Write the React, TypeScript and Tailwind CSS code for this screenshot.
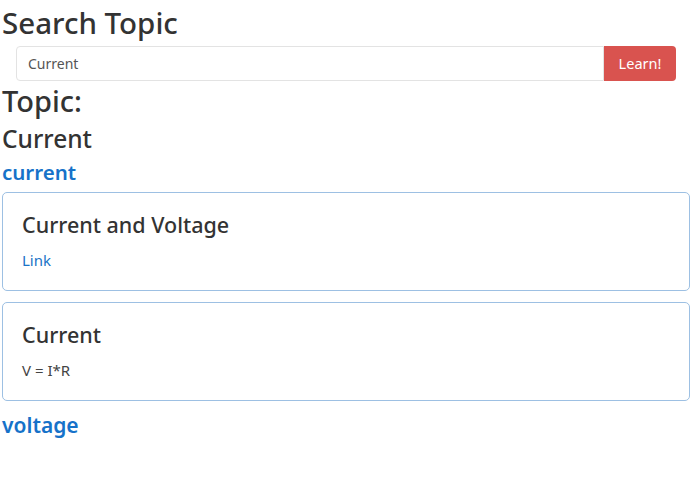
import { useState } from 'react'

const results = [
  { title: 'Current and Voltage', body: 'Link', isLink: true },
  { title: 'Current', body: 'V = I*R', isLink: false },
]

export default function App() {
  const [query, setQuery] = useState('Current')

  return (
    <div className="min-h-screen bg-white pl-[2px] pr-[5px] text-[#333] font-['Noto_Sans',sans-serif]">
      <h1 className="text-[29.5px] font-medium leading-[45px]">Search Topic</h1>

      {/* Search bar */}
      <div className="ml-[14px] mr-[14px] mt-[1px] flex h-[35px]">
        <input
          value={query}
          onChange={(e) => setQuery(e.target.value)}
          className="flex-1 rounded-l-[4px] border border-[#e3e3e3] px-[11px] text-[14px] text-[#555] outline-none"
        />
        <button className="w-[72px] rounded-r-[4px] bg-[#d9534f] text-[14.5px] text-white">Learn!</button>
      </div>

      <h2 className="mt-[1px] text-[29px] font-medium leading-[38px]">Topic:</h2>
      <h3 className="mt-[2px] text-[24.5px] font-medium leading-[34px]">Current</h3>

      <a href="#" className="mt-[1px] block text-[20.5px] font-semibold leading-[30px] text-[#1672c9]">current</a>

      <div className="mt-[5px] flex flex-col gap-[11px]">
        {results.map((r) => (
          <div key={r.title} className="h-[99px] rounded-[5px] border border-[#9dc0e3] px-[19px] pt-[17px]">
            <h4 className="text-[21.5px] font-medium leading-[30px]">{r.title}</h4>
            {r.isLink ? (
              <a href="#" className="mt-[10px] block text-[15px] leading-[20px] text-[#1a73c7]">{r.body}</a>
            ) : (
              <p className="mt-[10px] text-[15px] leading-[20px] text-[#444]">{r.body}</p>
            )}
          </div>
        ))}
      </div>

      <a href="#" className="mt-[9px] block text-[21px] font-semibold leading-[30px] text-[#1672c9]">voltage</a>
    </div>
  )
}
